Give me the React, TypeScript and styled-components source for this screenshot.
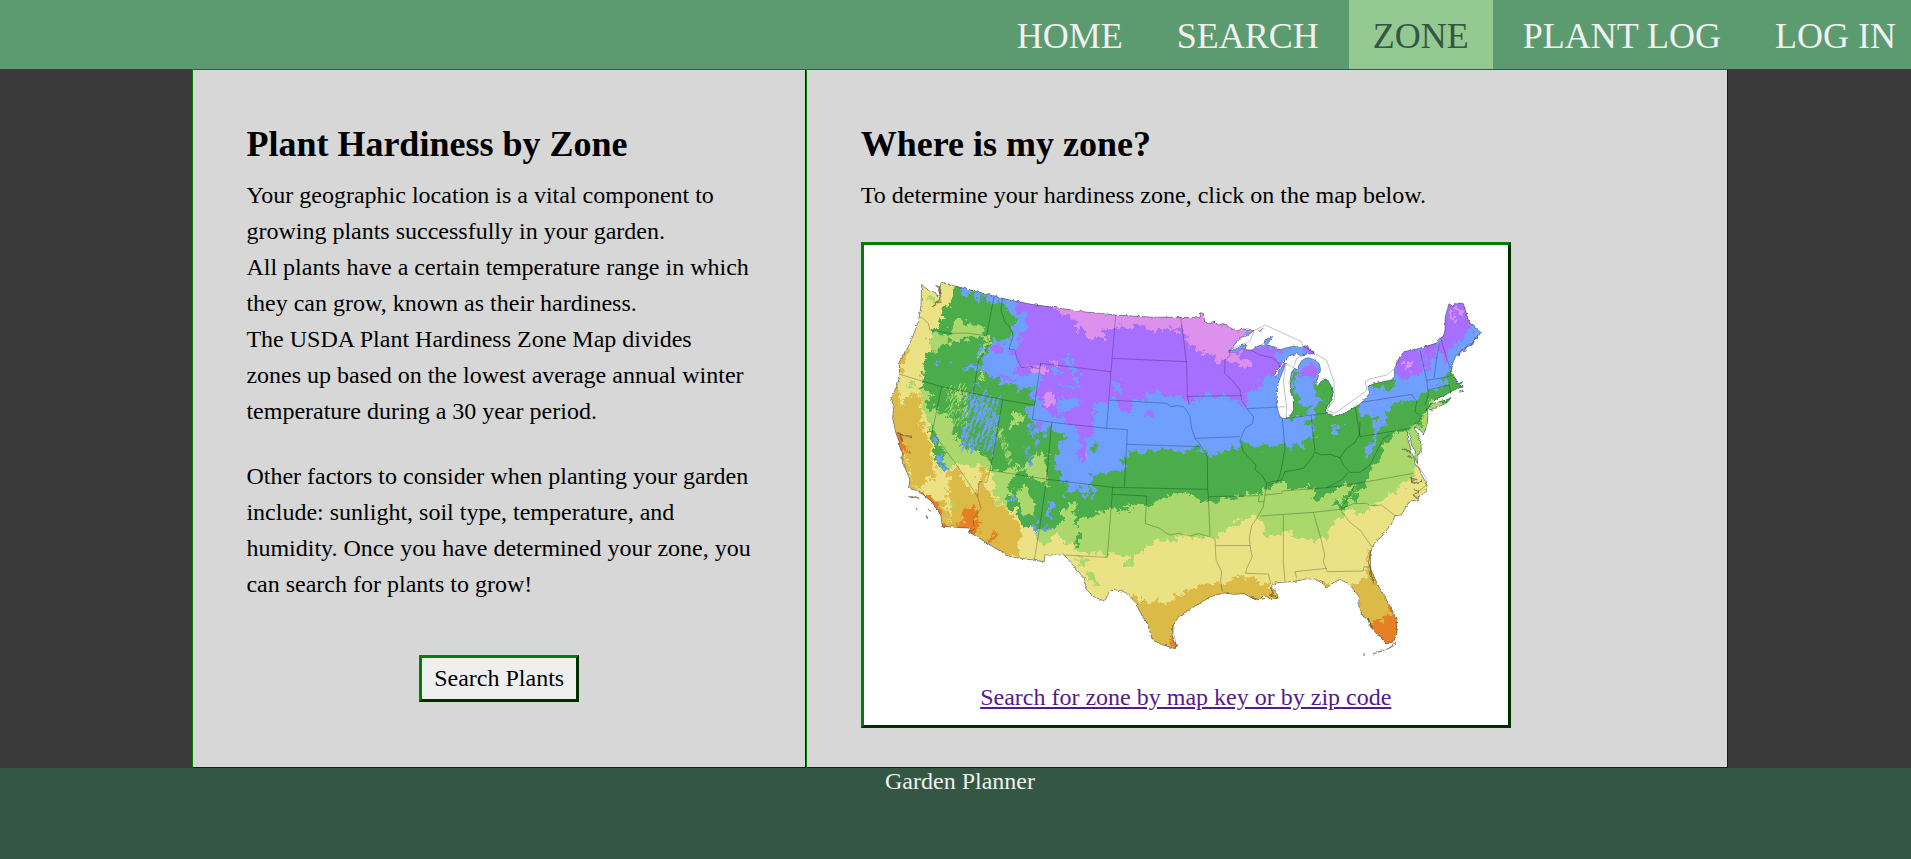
import React from 'react';
import styled, { createGlobalStyle } from 'styled-components';

const GlobalStyle = createGlobalStyle`
  * { box-sizing: border-box; }
  html, body { margin: 0; padding: 0; }
  body {
    background: #3a3a3a;
    color: #000;
    font-family: "Liberation Serif", "Times New Roman", serif;
    font-size: 24px;
    overflow: hidden;
  }
`;

const Page = styled.div`
  width: 1920px;
  height: 859px;
  display: flex;
  flex-direction: column;
`;

const NavBar = styled.nav`
  display: flex;
  justify-content: flex-end;
  gap: 6px;
  height: 69px;
  background: #5c9b6f;
`;

const NavLink = styled.a<{ $active?: boolean }>`
  padding: 16px 24px 0;
  font-size: 36px;
  line-height: 41px;
  text-decoration: none;
  color: ${(p) => (p.$active ? '#345743' : '#f0f0f0')};
  background: ${(p) => (p.$active ? '#94ca92' : 'transparent')};
`;

const Main = styled.main`
  display: flex;
  width: 80%;
  height: 699px;
  margin: 0 auto;
`;

const Panel = styled.section<{ $width: string }>`
  width: ${(p) => p.$width};
  padding: 54px 53.4px;
  background: #d7d7d7;
  border: 1px outset green;
`;

const Heading = styled.h1`
  margin: 0 0 12px;
  font-size: 36px;
  line-height: 41px;
  font-weight: bold;
`;

const Text = styled.p`
  margin: 0 0 29px;
  line-height: 36px;
`;

const ButtonRow = styled.div`
  display: flex;
  justify-content: center;
  padding-top: 24px;
`;

const Button = styled.button`
  width: 160px;
  height: 47px;
  padding: 0;
  border: 3px outset green;
  background: #efefef;
  color: #000;
  font: inherit;
`;

const MapCard = styled.div`
  width: 650px;
  height: 486px;
  border: 3px outset green;
  background: #fff;
  text-align: center;
`;

const MapLink = styled.a`
  color: #551a8b;
  line-height: 36px;
  text-decoration: underline;
`;

const MapDrawing = styled.svg`
  display: block;
  width: 644px;
  height: 434px;
`;

const Footer = styled.footer`
  flex: 1;
  background: #345743;
  color: #f0f0f0;
  text-align: center;
  line-height: 27px;
`;

const C = {
  pink: '#de91ec',
  purple: '#a76fff',
  blue: '#6f9fff',
  green: '#4aad4a',
  lime: '#aad86c',
  yellow: '#eae285',
  gold: '#dcba48',
  orange: '#e58025',
};

const COUNTRY =
  '215,148 228,160 240,168 256,172 262,185 270,180 268,160 275,142 330,157 430,182 480,195 540,207 610,217 700,230 797,240 900,246 990,247 1050,248 1051,233 1060,235 1064,260 1080,265 1096,262 1106,270 1120,266 1132,272 1140,280 1153,283 1164,288 1175,280 1190,285 1213,286 1195,300 1172,308 1155,328 1138,347 1158,342 1178,330 1190,330 1184,344 1202,345 1222,334 1240,328 1250,312 1268,304 1258,320 1250,330 1275,336 1290,344 1310,338 1330,333 1352,338 1366,332 1376,336 1378,346 1395,350 1393,356 1370,357 1352,362 1340,356 1320,362 1308,372 1298,382 1285,402 1272,420 1274,428 1284,415 1300,388 1308,376 1302,400 1286,440 1279,480 1282,520 1290,545 1305,551 1320,545 1331,525 1330,495 1322,470 1320,440 1324,412 1334,400 1344,404 1346,392 1358,372 1375,368 1392,374 1408,386 1412,405 1405,425 1398,445 1404,452 1414,438 1426,432 1436,438 1444,455 1448,480 1442,500 1432,512 1428,530 1440,538 1456,542 1478,538 1500,525 1525,510 1544,495 1558,475 1554,452 1572,446 1600,440 1626,434 1634,420 1632,405 1640,383 1650,365 1662,350 1700,342 1758,325 1768,311 1780,304 1785,285 1785,245 1797,206 1808,214 1820,203 1840,206 1846,225 1858,265 1872,270 1876,280 1893,292 1884,305 1872,318 1864,332 1850,335 1836,350 1818,362 1808,385 1806,402 1802,412 1818,432 1822,446 1838,440 1828,452 1840,456 1822,460 1800,472 1780,484 1765,488 1750,500 1738,512 1730,520 1734,535 1732,565 1720,600 1716,592 1703,580 1692,576 1702,596 1712,618 1714,640 1706,660 1702,688 1694,668 1696,648 1684,630 1680,600 1674,590 1672,612 1680,632 1684,650 1692,668 1696,690 1706,696 1716,722 1732,750 1726,772 1706,786 1704,798 1686,796 1672,808 1660,830 1654,840 1635,842 1624,868 1610,885 1595,905 1578,918 1568,935 1560,958 1556,985 1566,1012 1584,1050 1602,1082 1625,1122 1640,1155 1641,1195 1630,1222 1608,1226 1600,1212 1580,1196 1562,1176 1555,1155 1540,1145 1526,1118 1527,1085 1513,1066 1494,1045 1470,1034 1455,1040 1430,1058 1416,1044 1395,1032 1368,1032 1330,1040 1296,1042 1278,1044 1262,1058 1280,1070 1284,1088 1266,1094 1242,1080 1224,1098 1200,1086 1182,1076 1150,1078 1120,1074 1080,1086 1050,1104 1012,1128 985,1146 970,1170 966,1200 980,1232 970,1240 940,1230 907,1215 893,1168 870,1130 850,1095 825,1070 793,1064 778,1070 768,1092 760,1098 730,1084 710,1065 703,1030 680,1004 660,980 643,960 585,960 583,980 480,965 430,936 356,890 362,880 277,874 272,840 258,818 245,800 218,778 198,766 175,760 180,735 170,710 162,690 154,668 158,655 150,640 147,618 138,595 128,550 130,510 122,485 138,460 148,430 148,380 160,360 175,335 190,300 205,260 213,210';

const LONG_ISLAND = '1728,526 1745,506 1760,502 1790,494 1804,488 1790,504 1750,522';

const FILLS: [string, string][] = [
  // northern interior
  [C.purple, '480,175 610,190 797,210 1000,215 1064,220 1213,270 1140,345 1200,345 1250,350 1285,380 1285,405 1270,425 1235,435 1225,465 1190,470 1180,515 1145,485 1080,482 1055,480 1025,510 990,490 950,475 895,475 885,500 850,498 845,540 820,525 795,490 770,500 728,505 732,560 712,580 725,620 700,690 680,660 695,590 640,550 590,530 562,500 575,405 520,395 500,355 515,300 530,250 500,220'],
  [C.purple, '1202,340 1250,330 1300,345 1280,372 1230,360'],
  [C.purple, '1355,325 1400,340 1400,360 1360,350'],
  [C.purple, '1355,400 1375,380 1400,400 1395,425 1370,435 1350,430'],
  [C.purple, '1632,400 1650,340 1705,335 1715,370 1730,400 1700,420 1660,425 1635,420'],
  [C.purple, '1712,335 1770,315 1762,360 1745,380 1745,430 1730,390'],
  [C.purple, '1770,300 1790,190 1850,190 1880,275 1840,300 1820,335 1795,350 1785,385 1770,350'],
  [C.pink, '613,200 797,220 990,225 1055,215 1075,255 1150,270 1223,280 1180,310 1165,320 1140,345 1150,375 1110,380 1090,360 1040,350 1012,320 998,275 975,300 965,270 920,290 860,265 840,285 810,275 760,280 740,305 720,290 690,290 680,260 650,240 620,235'],
  [C.pink, '700,285 730,290 765,295 750,312 720,312'],
  [C.pink, '1140,350 1165,355 1180,370 1200,380 1195,400 1170,390 1135,375'],
  [C.pink, '578,485 600,475 612,515 590,512'],
  [C.pink, '530,395 565,392 595,400 590,415 560,408'],
  [C.pink, '590,370 625,382 620,390 595,380'],
  [C.pink, '1660,385 1680,382 1682,404 1662,402'],
  [C.pink, '1800,230 1812,240 1820,262 1808,258 1795,240'],
  [C.pink, '1812,215 1832,215 1838,240 1822,240'],
  // inland patches of blue in the high plains
  [C.blue, '780,430 810,440 815,465 785,478 800,455'],
  [C.blue, '640,375 665,360 670,385 690,440 675,445 660,400'],
  [C.blue, '605,395 630,405 625,420 608,412'],
  [C.blue, '630,450 690,455 680,465 640,462'],
  [C.blue, '620,490 680,490 690,510 660,520 630,540'],
  [C.purple, '880,535 910,530 915,545 900,555'],
  // central band
  [C.green, '825,665 850,645 880,655 940,640 1000,655 1055,635 1075,665 1120,650 1165,640 1172,612 1200,635 1290,632 1345,632 1370,605 1390,620 1395,590 1365,560 1400,540 1450,530 1515,500 1530,545 1575,545 1600,550 1640,505 1690,505 1700,480 1775,460 1785,430 1800,395 1850,410 1860,520 1700,640 1600,850 1100,900 640,900 560,740 740,720 820,700'],
  [C.green, '1330,400 1345,405 1330,450 1345,500 1350,540 1320,560 1322,480'],
  [C.green, '1405,440 1440,425 1455,480 1440,540 1390,545 1395,520 1425,500 1395,480 1385,455'],
  [C.green, '1345,510 1380,515 1365,545 1335,545'],
  [C.green, '1550,435 1630,430 1625,465 1590,450 1555,460'],
  [C.blue, '1545,660 1556,625 1585,600 1565,660'],
  [C.blue, '1570,615 1575,560 1605,520 1610,555 1590,580'],
  [C.blue, '1452,570 1474,572 1474,592 1455,592'],
  // western green
  [C.green, '310,130 450,160 458,200 500,255 480,310 430,320 385,400 430,430 500,460 545,435 550,500 530,530 540,570 610,570 625,640 640,760 730,760 760,820 700,880 560,880 470,780 300,700 240,620 200,450 230,350'],
  [C.blue, '320,135 360,150 358,180 325,172'],
  [C.blue, '366,150 395,160 400,200 375,192'],
  [C.blue, '405,165 455,180 440,205 412,205'],
  [C.blue, '420,340 480,320 500,380 560,410 555,450 510,465 470,435 430,430 440,400 418,375'],
  [C.purple, '430,332 462,325 465,345 450,360 432,352'],
  [C.purple, '480,345 500,355 520,390 555,405 530,425 495,420 500,395'],
  [C.purple, '440,408 475,425 500,432 480,438 450,425'],
  [C.blue, '375,455 380,438 400,468'],
  [C.blue, '250,385 275,375 265,390'],
  [C.blue, '295,370 308,368 300,382'],
  [C.blue, '335,400 365,385 385,400 370,405'],
  [C.blue, '385,325 400,345 395,380 383,360'],
  [C.blue, '550,500 600,570 560,610 535,590'],
  [C.blue, '615,620 660,600 700,580 735,600 740,650 830,590 815,690 780,715 725,690 720,770 700,785 690,750 650,780 640,720 610,690'],
  [C.blue, '740,540 830,585 830,640 735,640'],
  [C.blue, '590,805 605,800 605,850 592,855'],
  [C.blue, '545,850 555,845 555,870 543,868'],
  [C.blue, '730,760 740,755 735,795 725,790'],
  [C.purple, '680,560 720,550 725,600 705,620 700,680 680,660 690,620'],
  [C.purple, '550,560 585,562 580,572 555,572'],
  [C.pink, '698,655 710,655 706,668'],
  [C.green, '735,620 745,640 730,655 722,640'],
  [C.green, '610,580 645,600 655,615 625,625 640,650 612,660'],
  // light green
  [C.lime, '245,300 300,295 315,258 340,262 400,280 420,310 365,308 300,320 270,340 240,350'],
  [C.lime, '385,400 400,415 415,445 395,430'],
  [C.lime, '405,310 420,320 400,350 385,380 398,340'],
  [C.lime, '205,440 245,480 250,530 300,540 310,600 350,640 420,660 425,700 500,705 530,670 560,655 590,650 590,720 600,760 560,740 510,700 470,760 420,740 300,700 240,640 195,480'],
  [C.lime, '487,530 515,535 522,555 505,575 488,550'],
  [C.lime, '325,460 345,470 332,500 320,490'],
  [C.lime, '430,740 470,745 490,770 480,800 510,840 550,880 540,900 460,830 420,790'],
  [C.lime, '500,760 530,760 550,800 550,840 520,830 500,800'],
  [C.lime, '560,890 620,880 650,800 680,810 670,870 720,850 790,815 810,835 850,810 900,815 940,785 980,770 1020,780 1085,805 1170,785 1230,775 1270,750 1300,740 1320,760 1385,760 1392,805 1430,780 1480,755 1520,740 1500,800 1550,750 1565,695 1600,650 1620,605 1680,580 1715,550 1740,500 1820,500 1760,800 1500,1000 700,1040 640,960 560,940'],
  [C.green, '1450,815 1490,780 1520,740 1500,790 1480,820'],
  [C.green, '1700,560 1725,550 1715,580'],
  [C.green, '465,765 500,810 520,840 560,860 555,882 520,870 480,825'],
  [C.green, '678,900 690,900 690,930 680,932'],
  [C.blue, '477,782 492,788 488,805 476,800'],
  // yellow
  [C.yellow, '190,120 325,130 300,200 275,230 270,270 245,290 240,340 222,400 215,450 205,470 230,560 255,640 275,700 310,690 360,690 420,700 430,740 440,800 500,830 520,870 550,885 570,930 630,895 640,930 670,920 690,950 775,955 855,970 890,930 960,915 1020,905 1110,900 1140,875 1205,845 1230,850 1252,910 1270,905 1300,885 1345,905 1400,925 1430,895 1470,850 1495,825 1530,840 1580,810 1600,785 1650,760 1690,730 1700,690 1800,690 1800,1260 700,1260 640,1060 300,1060 180,800 100,500 100,400'],
  [C.lime, '232,180 255,185 250,200 235,195'],
  [C.lime, '675,960 715,970 700,1000'],
  [C.lime, '710,1010 735,1005 742,1045 718,1045'],
  [C.lime, '822,970 850,968 855,990 830,998'],
  [C.lime, '170,445 195,440 190,460'],
  // Sierra Nevada
  [C.green, '225,490 262,480 250,520 235,515'],
  [C.green, '235,570 262,610 280,660 275,710 262,700 252,650'],
  [C.blue, '250,600 262,610 262,640 250,630'],
  [C.blue, '262,655 273,665 272,705 263,700'],
  // gold
  [C.gold, '90,450 145,470 150,520 170,485 200,475 210,500 210,550 230,600 240,650 255,700 240,745 200,750 250,775 300,760 290,700 325,700 360,760 388,780 380,710 415,700 405,760 440,800 500,850 515,890 500,950 460,985 350,930 240,910 190,800 110,740'],
  [C.gold, '140,370 175,335 165,385 145,420'],
  [C.yellow, '180,755 230,760 290,770 305,820 298,870 285,800 240,785'],
  [C.yellow, '158,650 175,700 190,740 180,690'],
  [C.yellow, '340,720 375,700 385,760'],
  [C.lime, '293,800 308,800 305,815 295,812'],
  [C.gold, '835,1075 870,1095 920,1095 950,1100 1000,1070 1050,1050 1120,1045 1175,1020 1205,1032 1230,1040 1270,1045 1300,1100 1000,1260 880,1260'],
  [C.gold, '1410,1035 1450,1055 1440,1070 1400,1050'],
  [C.gold, '1555,935 1548,1030 1500,1052 1500,1260 1680,1260 1640,1080 1565,990'],
  [C.orange, '1565,1150 1600,1165 1610,1145 1628,1142 1618,1090 1670,1140 1670,1260 1580,1240 1540,1160'],
  [C.orange, '200,770 250,785 275,830 285,885 250,880 210,800'],
  [C.orange, '345,830 370,805 375,840 395,865 365,915 325,880'],
  [C.orange, '415,900 440,898 435,915 420,915'],
  [C.orange, '125,585 160,600 165,635 180,645 140,655'],
  [C.orange, '962,1205 975,1205 990,1250 955,1255'],
];

const BORDERS = [
  '207,245 218,250 235,265 240,285 270,290 300,295 350,294 405,302',
  '432,184 410,302 418,320 408,345 385,380 370,475',
  '148,418 275,455 370,475 458,494 550,510',
  '458,190 453,225 464,260 478,275 490,300 477,342 495,345 500,370 515,398 540,395 568,402 572,385',
  '572,385 783,410',
  '572,385 547,553 605,562 770,580 832,584',
  '797,240 783,410 770,580',
  '788,370 1010,380',
  '778,495 950,505 962,515 980,512 1000,515 1012,530 1020,545 1025,580 1035,610 1048,625 1062,650 1072,665 1073,763 1075,785 1080,905 1095,912 1098,975 1115,1010 1112,1040 1117,1070',
  '992,248 998,290 1003,330 1010,390 1012,485 1018,510',
  '1012,484 1175,482',
  '832,584 830,628 1050,635',
  '830,628 823,757',
  '420,706 585,732 788,757 1073,763',
  '458,494 438,610 420,706 410,742 388,740 383,785 393,820 370,850 372,885 356,890',
  '605,562 590,732 570,870 553,975',
  '275,455 247,590 320,690 383,785',
  '788,757 772,967 643,960',
  '788,778 890,783 886,865 905,872 930,880 945,892 960,900 985,895 1020,903 1045,896 1080,905',
  '1075,785 1228,782 1225,800 1242,800',
  '1097,932 1200,932',
  '1138,347 1140,362 1125,375 1124,415 1150,440 1170,465 1175,495 1190,520 1210,545 1208,565 1185,580 1170,615 1180,650 1218,690 1215,705 1235,720 1250,745 1245,780 1240,815 1220,850 1205,872 1198,910 1202,945 1207,965 1190,1000 1187,1015 1255,1017 1262,1045',
  '1035,610 1170,605',
  '1192,521 1305,515',
  '1297,551 1305,640 1298,680 1290,720 1280,742 1255,752',
  '1383,540 1395,650',
  '1308,551 1383,540 1430,534',
  '1250,745 1275,738 1295,735 1305,710 1330,706 1360,700 1380,675 1395,652 1415,660 1440,658 1470,668 1490,640 1515,622 1528,600 1530,560',
  '1470,668 1480,690 1500,712 1530,712 1560,690 1580,650 1600,610 1620,600',
  '1515,512 1530,605 1680,580 1700,560',
  '1535,502 1685,478 1700,500 1695,530 1715,545 1695,578',
  '1245,780 1295,775 1297,768 1430,758 1540,742 1690,715',
  '1230,843 1390,832 1470,823 1500,782 1515,745',
  '1430,758 1475,735 1495,712',
  '1470,823 1510,806 1550,805 1560,812 1595,810 1635,842',
  '1475,830 1500,862 1530,885 1565,935',
  '1390,832 1415,920 1424,960 1420,980 1432,1010 1540,1008 1542,995 1560,996',
  '1300,840 1300,980 1305,1040',
  '1340,1030 1335,1010 1430,1000',
  '1710,345 1722,400 1730,435 1735,480 1725,510',
  '1768,325 1760,370 1752,430',
  '1772,308 1790,370 1802,400',
  '1730,436 1795,425 1805,420',
  '1733,465 1798,450 1802,474',
  '1202,345 1230,360 1265,368 1285,382 1290,400',
];

const LAKES = [
  '1213,286 1245,270 1355,320 1358,332 1395,356 1430,376 1452,440 1453,495 1430,525 1455,535 1515,492 1552,465 1545,440 1560,432 1610,420 1630,403',
  '1213,286 1200,318 1160,335 1138,347',
  '1308,385 1300,440 1310,515 1308,548',
  '1308,385 1330,398 1340,370 1370,357',
];

const ISLANDS = [
  '175,784 187,788 197,786 208,790',
  '198,820 202,824',
  '234,822 242,829',
  '228,841 234,850',
  '1225,292 1242,279',
  '1570,1256 1595,1248 1615,1240 1630,1232 1638,1222',
  '1540,1258 1545,1256',
  '1828,468 1842,466',
  '246,216 258,208 265,198 260,206 272,200 268,192 272,182 266,165 270,158 258,152 270,160',
  '142,592 160,602 186,604',
  '150,598 158,622',
  '1684,655 1670,645 1655,640',
  '1690,672 1672,662',
  '1704,792 1690,780 1706,770 1690,762',
  '1702,734 1682,730 1690,745 1716,738',
  '1560,945 1562,1010 1570,1045',
  '1850,335 1842,350 1835,345 1826,362',
  '1884,305 1874,312 1868,328 1858,326',
  '1262,1058 1270,1075 1260,1080 1282,1086',
  '1205,1088 1225,1094 1245,1090',
  '1555,1150 1560,1170 1572,1180',
];

const SOUNDS = ['1706,696 1728,728 1730,750 1704,770', '968,1170 972,1200 978,1228'];

// Short diagonal ranges of colder ground across the Great Basin.
const RIDGES = Array.from({ length: 90 }, (_, i) => {
  const y = 490 + ((i * 71) % 165);
  const x = 345 + ((i * 47) % 105) - (y - 490) * 0.12;
  const len = 10 + ((i * 13) % 16);
  return { d: `M${x} ${y} q1 ${-len / 2} ${len * 0.5} ${-len}`, color: C.blue, width: 3 + (i % 4) };
});

const WEST_RANGES = Array.from({ length: 60 }, (_, i) => {
  const y = 460 + ((i * 37) % 120);
  const x = 285 + ((i * 29) % 65);
  const len = 5 + ((i * 11) % 12);
  return { d: `M${x} ${y} l${len * 0.5} ${-len}`, color: C.lime, width: 2 + (i % 3) };
});

const ROCKIES = Array.from({ length: 80 }, (_, i) => {
  const x = 440 + ((i * 83) % 165);
  const y = 580 + ((i * 59) % 115);
  const len = 5 + ((i * 17) % 16);
  return { d: `M${x} ${y} q2 ${-len / 2} ${len * 0.6} ${-len}`, color: [C.green, C.blue, C.lime, C.green][i % 4], width: 3 + (i % 5) };
});

const STREAKS = [...RIDGES, ...WEST_RANGES, ...ROCKIES];

function ZoneMap() {
  return (
    <MapDrawing viewBox="42 30 1932 1302" role="img" aria-label="Plant hardiness zones">
      <defs>
        <clipPath id="country">
          <polygon points={COUNTRY} />
          <polygon points={LONG_ISLAND} />
        </clipPath>
        <filter id="ragged" filterUnits="userSpaceOnUse" x="42" y="30" width="1932" height="1302" colorInterpolationFilters="sRGB">
          <feTurbulence type="fractalNoise" baseFrequency="0.045" numOctaves={5} seed={8} result="n" />
          <feDisplacementMap in="SourceGraphic" in2="n" scale={48} xChannelSelector="R" yChannelSelector="G" />
        </filter>
        <filter id="coast" filterUnits="userSpaceOnUse" x="42" y="30" width="1932" height="1302" colorInterpolationFilters="sRGB">
          <feTurbulence type="fractalNoise" baseFrequency="0.09" numOctaves={2} seed={3} result="n" />
          <feDisplacementMap in="SourceGraphic" in2="n" scale={9} xChannelSelector="R" yChannelSelector="G" />
        </filter>
      </defs>
      <g filter="url(#coast)">
        <g clipPath="url(#country)">
          <rect x="42" y="30" width="1932" height="1302" fill={C.blue} />
          <g filter="url(#ragged)">
            {FILLS.map(([color, points], i) => (
              <polygon key={i} points={points} fill={color} />
            ))}
          </g>
          <g fill="none" strokeLinecap="round">
            {STREAKS.map((r, i) => (
              <path key={i} d={r.d} stroke={r.color} strokeWidth={r.width} />
            ))}
          </g>
        </g>
        <g fill="none" stroke="#000" strokeLinejoin="round">
          <polygon points={COUNTRY} strokeOpacity="0.4" strokeWidth="2.6" />
          <polygon points={LONG_ISLAND} strokeOpacity="0.4" strokeWidth="2.6" />
          {ISLANDS.map((points, i) => (
            <polyline key={i} points={points} stroke="#5a4a30" strokeOpacity="0.65" strokeWidth="4" />
          ))}
        </g>
      </g>
      <g fill="none" stroke="#000" strokeLinejoin="round">
        {BORDERS.map((points, i) => (
          <polyline key={i} points={points} strokeOpacity="0.27" strokeWidth="2.8" />
        ))}
        {[...LAKES, ...SOUNDS].map((points, i) => (
          <polyline key={i} points={points} strokeOpacity="0.28" strokeWidth="2.6" />
        ))}
      </g>
    </MapDrawing>
  );
}

const LINKS = ['HOME', 'SEARCH', 'ZONE', 'PLANT LOG', 'LOG IN'];

export default function App() {
  return (
    <Page>
      <GlobalStyle />
      <NavBar>
        {LINKS.map((label) => (
          <NavLink key={label} $active={label === 'ZONE'}>
            {label}
          </NavLink>
        ))}
      </NavBar>
      <Main>
        <Panel $width="40%">
          <Heading>Plant Hardiness by Zone</Heading>
          <Text>
            Your geographic location is a vital component to growing plants successfully in your garden.
            <br />
            All plants have a certain temperature range in which they can grow, known as their hardiness.
            <br />
            The USDA Plant Hardiness Zone Map divides zones up based on the lowest average annual winter temperature
            during a 30 year period.
          </Text>
          <Text>
            Other factors to consider when planting your garden include: sunlight, soil type, temperature, and
            humidity. Once you have determined your zone, you can search for plants to grow!
          </Text>
          <ButtonRow>
            <Button>Search Plants</Button>
          </ButtonRow>
        </Panel>
        <Panel $width="60%">
          <Heading>Where is my zone?</Heading>
          <Text>To determine your hardiness zone, click on the map below.</Text>
          <MapCard>
            <ZoneMap />
            <MapLink>Search for zone by map key or by zip code</MapLink>
          </MapCard>
        </Panel>
      </Main>
      <Footer>Garden Planner</Footer>
    </Page>
  );
}
